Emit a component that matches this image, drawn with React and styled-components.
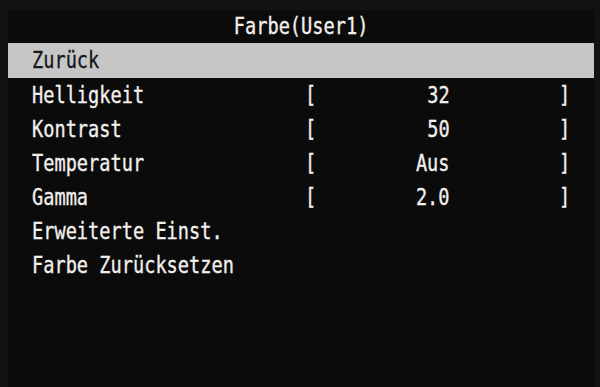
import React from "react";
import styled, { createGlobalStyle } from "styled-components";

const Global = createGlobalStyle`
  html, body { margin: 0; padding: 0; background: #121212; }
  body { width: 600px; height: 387px; overflow: hidden; }
`;

const Screen = styled.div`
  width: 600px;
  height: 387px;
  box-sizing: border-box;
  padding: 10px 6px 0 8px;
  background: #121212;
  font-family: "DejaVu Sans Mono", "Liberation Mono", monospace;
  font-size: 23px;
`;

const Panel = styled.div`
  height: 100%;
  background: #0b0b0c;
  display: flex;
  flex-direction: column;
`;

const TitleBar = styled.div`
  height: 33px;
  line-height: 33px;
  text-align: center;
  color: #f2efec;
`;

const Squeeze = styled.span`
  display: inline-block;
  white-space: pre;
  -webkit-text-stroke: 0.35px currentColor;
  transform: scaleX(0.81);
  transform-origin: ${(p) => p.$origin || "left"} center;
`;

const Row = styled.div`
  display: grid;
  grid-template-columns: 275px 10px 133px 113px 20px;
  height: ${(p) => (p.$selected ? 35 : 34)}px;
  line-height: ${(p) => (p.$selected ? 35 : 34)}px;
  padding-left: 24px;
  background: ${(p) => (p.$selected ? "#c6c6c6" : "transparent")};
  color: ${(p) => (p.$selected ? "#15161f" : "#f2efec")};
`;

const Label = styled.div`
  white-space: nowrap;
  overflow: visible;
`;

const Bracket = styled.div`
  position: relative;
  left: ${(p) => p.$shift}px;
`;

const Value = styled.div`
  text-align: right;
  white-space: pre;
`;

const items = [
  { label: "Helligkeit", value: "32" },
  { label: "Kontrast", value: "50" },
  { label: "Temperatur", value: "Aus" },
  { label: "Gamma", value: "2.0" },
  { label: "Erweiterte Einst." },
  { label: "Farbe Zurücksetzen" },
];

export default function App() {
  return (
    <Screen>
      <Global />
      <Panel>
        <TitleBar>
          <Squeeze $origin="center">Farbe(User1)</Squeeze>
        </TitleBar>
        <Row $selected>
          <Label>
            <Squeeze>Zurück</Squeeze>
          </Label>
        </Row>
        {items.map((it) => (
          <Row key={it.label}>
            <Label>
              <Squeeze>{it.label}</Squeeze>
            </Label>
            {it.value !== undefined && (
              <>
                <Bracket $shift={-2}>
                  <Squeeze>[</Squeeze>
                </Bracket>
                <Value>
                  <Squeeze $origin="right">{it.value}</Squeeze>
                </Value>
                <div />
                <Bracket $shift={-4}>
                  <Squeeze>]</Squeeze>
                </Bracket>
              </>
            )}
          </Row>
        ))}
      </Panel>
    </Screen>
  );
}
